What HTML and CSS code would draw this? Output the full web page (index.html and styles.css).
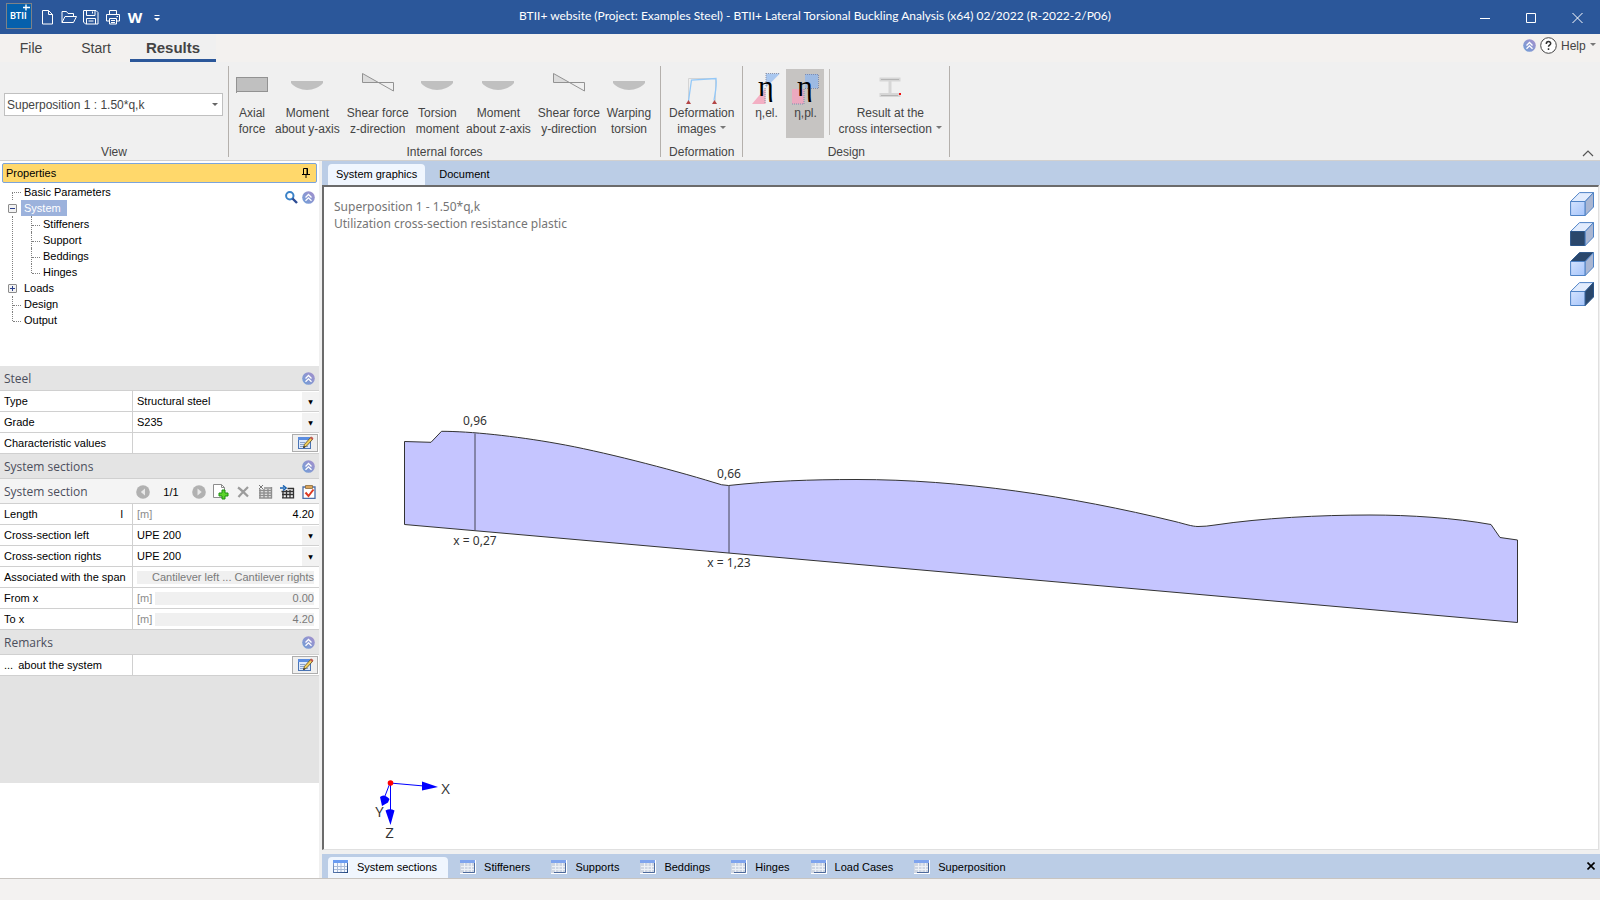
FILE: index.html
```html
<!DOCTYPE html>
<html lang="en">
<head>
    <meta charset="UTF-8">
    <meta name="viewport" content="width=device-width, initial-scale=1.0">
    <title>BTII+ website (Project: Examples Steel)</title>
    <link rel="stylesheet" href="styles.css">
</head>
<body>

<svg class="symbols" aria-hidden="true">
    <defs>
        <linearGradient id="gradFront" x1="0" y1="0" x2="1" y2="1">
            <stop offset="0" stop-color="#d4e3fd"/><stop offset="1" stop-color="#a5c4fb"/>
        </linearGradient>
        <linearGradient id="gradTable" x1="0" y1="0" x2="1" y2="1">
            <stop offset="0" stop-color="#8aa6d8"/><stop offset="1" stop-color="#23477f"/>
        </linearGradient>
        <linearGradient id="gradRound" x1="1" y1="0" x2="0" y2="1">
            <stop offset="0" stop-color="#a58fcb"/><stop offset="1" stop-color="#6f9fd8"/>
        </linearGradient>
    </defs>
    <symbol id="collapse" viewBox="0 0 13 13">
        <circle cx="6.5" cy="6.5" r="6.3" fill="url(#gradRound)"/>
        <path d="M3.5 6.5l3-3 3 3M3.5 9.8l3-3 3 3" fill="none" stroke="#fff" stroke-width="1.3"/>
    </symbol>
    <symbol id="arc" viewBox="0 0 32 36">
        <path d="M0 12h32v2c-3 4-10 7-16 7s-13-3-16-7z" fill="#c0c0c0"/>
    </symbol>
    <symbol id="shear" viewBox="0 0 32 36">
        <path d="M0.500 4.500v9h16z" fill="#dcdcdc"/>
        <path d="M0.500 4.500v9h31v8.500z" fill="none" stroke="#929292"/>
    </symbol>
    <symbol id="table" viewBox="0 0 16 14">
        <rect x="0" y="0" width="15.500" height="13.500" fill="#fff"/>
        <rect x="0.500" y="0.500" width="14" height="12" fill="#f4f8ff" stroke="url(#gradTable)"/>
        <rect x="0" y="0" width="15" height="3" fill="#6a9cf2"/>
        <path d="M1 6.500h13M1 9.500h13M4.500 3v9M8 3v9M11.500 3v9" stroke="#a9bbd8" fill="none"/>
    </symbol>
    <symbol id="tableDim" viewBox="0 0 16 14">
        <rect x="0" y="0" width="16" height="14" fill="#fff"/>
        <rect x="0" y="0" width="15" height="13" fill="#cfd6e2"/>
        <rect x="0" y="0" width="15" height="3" fill="#7fa4ee"/>
        <path d="M1 6.500h13M1 9.500h13M4.500 3v9M8 3v9M11.500 3v9" stroke="#eef1f6" fill="none"/>
        <path d="M14.500 3v9.500H3" stroke="#4d6a9c" fill="none"/>
    </symbol>
    <symbol id="edit" viewBox="0 0 17 14">
        <rect x="1.500" y="1.500" width="12" height="11" fill="#dce9fc" stroke="#4a74b4"/>
        <rect x="1" y="1" width="13" height="3" fill="#5b8de0"/>
        <path d="M3 6.500h5M3 8.500h4M3 10.500h8" stroke="#8aa4cc"/>
        <path d="M6.500 11.500l1-3.200 6.300-7 2 1.800-6.300 7z" fill="#f2cf5b" stroke="#5a4a20" stroke-width="0.800"/>
        <path d="M13 2l1.500-1.500 2 1.800-1.500 1.600z" fill="#c4574e"/>
        <path d="M6.300 12l.6-2 1.400 1.300z" fill="#111"/>
    </symbol>
    <symbol id="cubeTop" viewBox="0 0 24 24">
        <path d="M0.600 9.500L9.500 0.600h14l-8.300 8.900z"/>
    </symbol>
    <symbol id="cubeFront" viewBox="0 0 24 24">
        <path d="M0.600 9.500h14.600v14H0.600z"/>
    </symbol>
    <symbol id="cubeSide" viewBox="0 0 24 24">
        <path d="M15.200 9.500l8.300-8.900v14.400l-8.300 8.500z"/>
    </symbol>
</svg>

<div class="app">
    <header class="titlebar">
        <div class="quick">
            <svg class="logo" width="27" height="27" viewBox="0 0 27 27">
                <rect x="0.500" y="0.500" width="25" height="25" fill="#0560ac" stroke="#7d8288"/>
                <text x="4" y="16" class="logo-text">BTII</text>
                <path d="M20 1.500v6M17 4.500h7" stroke="#fff" stroke-width="1.400"/>
            </svg>
            <button type="button" aria-label="New">
                <svg width="16" height="16" viewBox="0 0 16 16"><path d="M3.500 1.500h6l4 4v9.500h-10zM9.500 1.500v4h4"/></svg>
            </button>
            <button type="button" aria-label="Open">
                <svg width="16" height="16" viewBox="0 0 16 16"><path d="M1 13.500v-11h4.500l1.500 2h5.500v3M1 13.500l3-6h11.500l-3 6z"/></svg>
            </button>
            <button type="button" aria-label="Save">
                <svg width="16" height="16" viewBox="0 0 16 16"><path d="M0.500 1.500h12.500l2 2v11.500h-12.500l-2-2zM3.500 1.500v5h8.500v-5M9.500 2.500v2M3.500 15v-5.500h9v5.500M5.500 12h5"/></svg>
            </button>
            <button type="button" aria-label="Print">
                <svg width="16" height="16" viewBox="0 0 16 16"><path d="M4.500 5.500v-4h7v4M4.500 12h-3v-6.500h13v6.500h-3M4.500 9.500h7v5.500h-7zM6 11.500h4M6 13.500h4M11.500 7.500h1.500"/></svg>
            </button>
            <button type="button" class="word" aria-label="Export to Word">W</button>
            <button type="button" aria-label="Customize toolbar">
                <svg width="16" height="16" viewBox="0 0 16 16"><path d="M5.500 6.500h5"/><path class="solid" d="M5 9h6l-3 3z"/></svg>
            </button>
        </div>
        <div class="title">BTII+ website (Project: Examples Steel) - BTII+ Lateral Torsional Buckling Analysis (x64) 02/2022 (R-2022-2/P06)</div>
        <div class="window-buttons">
            <button type="button" aria-label="Minimize"><svg width="11" height="11"><path d="M0 6.500h10"/></svg></button>
            <button type="button" aria-label="Maximize"><svg width="11" height="11"><path d="M0.500 1.500h9v9h-9z"/></svg></button>
            <button type="button" aria-label="Close"><svg width="11" height="11"><path d="M0.500 1l10 10M10.500 1l-10 10"/></svg></button>
        </div>
    </header>

    <nav class="menu">
        <button type="button">File</button>
        <button type="button">Start</button>
        <button type="button" class="active">Results</button>
        <div class="help">
            <svg width="13" height="13"><use href="#collapse"/></svg>
            <svg width="17" height="17" viewBox="0 0 17 17"><circle cx="8.500" cy="8.500" r="7.800" fill="#fff" stroke="#444"/><path d="M6.300 7c0-3.300 4.600-3 4.400-.4-.2 1.600-2.200 1.500-2.200 3.200M8.500 11.200v1.700" fill="none" stroke="#333" stroke-width="1.500"/></svg>
            <button type="button">Help <i class="caret"></i></button>
        </div>
    </nav>

    <section class="ribbon">
        <div class="group view">
            <div class="body">
                <label class="combo">
                    <select aria-label="Superposition">
                        <option>Superposition 1 : 1.50*q,k</option>
                    </select>
                </label>
            </div>
            <div class="caption">View</div>
        </div>
        <div class="group forces">
            <div class="body">
                <button type="button"><svg width="32" height="36"><rect x="0.500" y="8.500" width="31" height="14" fill="#c0c0c0" stroke="#929292"/><path d="M0.500 22v2" stroke="#929292"/></svg>Axial<br>force</button>
                <button type="button"><svg width="32" height="36"><use href="#arc"/></svg>Moment<br>about y-axis</button>
                <button type="button"><svg width="32" height="36"><use href="#shear"/></svg>Shear force<br>z-direction</button>
                <button type="button"><svg width="32" height="36"><use href="#arc"/></svg>Torsion<br>moment</button>
                <button type="button"><svg width="32" height="36"><use href="#arc"/></svg>Moment<br>about z-axis</button>
                <button type="button"><svg width="32" height="36"><use href="#shear"/></svg>Shear force<br>y-direction</button>
                <button type="button"><svg width="32" height="36"><use href="#arc"/></svg>Warping<br>torsion</button>
            </div>
            <div class="caption">Internal forces</div>
        </div>
        <div class="group deformation">
            <div class="body">
                <button type="button">
                    <svg width="32" height="36"><path d="M2.500 32v-22.500h27v22.500" fill="none" stroke="#d4d4d4"/><path d="M2.500 32L5.500 11 30 9.500c1 8-1 15-2 22" fill="none" stroke="#93c8f8" stroke-width="1.300"/><path d="M0 35l2.500-4 2.500 4zM26 35l2.500-4 2.500 4z" fill="#b34545"/></svg>
                    Deformation<br>images <i class="caret"></i>
                </button>
            </div>
            <div class="caption">Deformation</div>
        </div>
        <div class="group design">
            <div class="body">
                <button type="button" class="eta-button">
                    <svg width="28" height="36" viewBox="0 0 28 36"><path d="M14 4.500h14l-14 14z" fill="#a9c7ef"/><path d="M13.500 19v16H0z" fill="#f3afc3"/><path d="M14 4.500h14M14 4v14M13 19v16" stroke="#8e94a8" stroke-dasharray="1 1"/><text x="6" y="27" class="eta">η</text></svg>
                    η,el.
                </button>
                <button type="button" class="eta-button pressed">
                    <svg width="28" height="36" viewBox="0 0 28 36"><path d="M14 5h13v14H14z" fill="#9dbae3"/><path d="M1 20h12v15H1z" fill="#eba9bf"/><path d="M14 5.500h13.500v14H14M13 20v15H1" fill="none" stroke="#7f8cae" stroke-dasharray="1 1"/><text x="6" y="27" class="eta">η</text></svg>
                    η,pl.
                </button>
                <span class="divider"></span>
                <button type="button">
                    <svg width="32" height="36"><path d="M5.500 10.500h21M5.500 26h21" stroke="#d6d6d6" stroke-width="4"/><path d="M16 11v15" stroke="#d6d6d6" stroke-width="3"/><path d="M7 10.500h18M7 26.500h17" stroke="#b4b4b4"/><path d="M25 24h2v2h-2z" fill="#f01010"/></svg>
                    Result at the<br>cross intersection <i class="caret"></i>
                </button>
            </div>
            <div class="caption">Design</div>
        </div>
        <button type="button" class="fold" aria-label="Collapse ribbon"><svg width="12" height="7"><path d="M1 6l5-5 5 5" fill="none" stroke="#555" stroke-width="1.200"/></svg></button>
    </section>

    <div class="workspace">
        <aside class="sidebar">
            <h2 class="panel-title">Properties
                <button type="button" aria-label="Pin"><svg width="8" height="10"><path d="M1.500 6V0.500h4V6M5 0v6M0 6.500h8M4 7v3" fill="none" stroke="#000"/></svg></button>
            </h2>

            <div class="tree-panel">
                <ul class="tree">
                    <li><span class="branch first"></span><a href="#">Basic Parameters</a></li>
                    <li><button type="button" class="expander" aria-label="Collapse System"><svg width="5" height="5"><path d="M0 2.500h5"/></svg></button><a href="#" class="selected">System</a></li>
                    <li class="nested">
                        <ul>
                            <li><span class="branch"></span><a href="#">Stiffeners</a></li>
                            <li><span class="branch"></span><a href="#">Support</a></li>
                            <li><span class="branch"></span><a href="#">Beddings</a></li>
                            <li><span class="branch last"></span><a href="#">Hinges</a></li>
                        </ul>
                    </li>
                    <li><button type="button" class="expander" aria-label="Expand Loads"><svg width="5" height="5"><path d="M0 2.500h5M2.500 0v5"/></svg></button><a href="#">Loads</a></li>
                    <li><span class="branch"></span><a href="#">Design</a></li>
                    <li><span class="branch last"></span><a href="#">Output</a></li>
                </ul>
                <div class="tree-tools">
                    <button type="button" aria-label="Search"><svg width="13" height="13"><circle cx="4.800" cy="4.800" r="3.700" fill="#fff" stroke="#3a82c8" stroke-width="2"/><path d="M7.500 7.500l4.500 4.500" stroke="#2c4c94" stroke-width="2.400"/></svg></button>
                    <button type="button" aria-label="Collapse"><svg width="13" height="13"><use href="#collapse"/></svg></button>
                </div>
            </div>

            <form class="properties">
                <h3>Steel <button type="button" aria-label="Collapse Steel"><svg width="13" height="13"><use href="#collapse"/></svg></button></h3>
                <div class="row">
                    <label for="type">Type</label>
                    <div class="value drop"><select id="type"><option>Structural steel</option></select></div>
                </div>
                <div class="row">
                    <label for="grade">Grade</label>
                    <div class="value drop"><select id="grade"><option>S235</option></select></div>
                </div>
                <div class="row">
                    <label for="characteristic">Characteristic values</label>
                    <div class="value"><button type="button" id="characteristic" class="edit"><svg width="17" height="14"><use href="#edit"/></svg></button></div>
                </div>

                <h3>System sections <button type="button" aria-label="Collapse System sections"><svg width="13" height="13"><use href="#collapse"/></svg></button></h3>
                <div class="record">
                    <h4>System section</h4>
                    <button type="button" aria-label="Previous"><svg width="14" height="14"><circle cx="7" cy="7" r="6.800" fill="#b1b1b1"/><path d="M9 3.500v7L4.800 7z" fill="#e8e8e8"/></svg></button>
                    <span class="count">1/1</span>
                    <button type="button" aria-label="Next"><svg width="14" height="14"><circle cx="7" cy="7" r="6.800" fill="#b1b1b1"/><path d="M5.500 3.500v7L9.700 7z" fill="#e8e8e8"/></svg></button>
                    <button type="button" aria-label="Add"><svg width="16" height="16"><path d="M0.500 0.500h8l3 3v10h-11z" fill="#fff" stroke="#8c8c8c"/><path d="M8.500 0.500v3h3" fill="none" stroke="#8c8c8c"/><path d="M9 6h3v3h3v3h-3v3H9v-3H6V9h3z" fill="#5bd42c" stroke="#1d8f10"/></svg></button>
                    <button type="button" aria-label="Delete"><svg width="12" height="12"><path d="M1 1.500c3 2 7 6 10 9M11 1C8 4 4 8 1.500 11" fill="none" stroke="#9c9c9c" stroke-width="2.200"/></svg></button>
                    <button type="button" aria-label="Clear table"><svg width="15" height="14"><path d="M1 5.500h13M1 8h13M1 10.500h13M1 13h13M2 4v9.500M6 4v9.500M10 4v9.500M13.500 2v11.500M6 3h8" fill="none" stroke="#8e8e8e" stroke-width="1.400"/><path d="M1 0l4 4M5 0L1 4" stroke="#777"/></svg></button>
                    <button type="button" aria-label="Insert table"><svg width="15" height="14"><path d="M3 6v7.500M1.500 6.500H14M2 9.500h12M2 12.800h12M6.500 5v8M10 5v8M13.500 3v10.500M7.500 3.500H14" fill="none" stroke="#333" stroke-width="1.300"/><path d="M0 3h4M3 0.500L6 3 3 5.500" fill="none" stroke="#1660b0" stroke-width="1.600"/></svg></button>
                    <button type="button" aria-label="Check"><svg width="14" height="14"><path d="M1 2h12v11.500H1z" fill="#fff" stroke="#4d6fa8" stroke-width="1.300"/><path d="M3.500 0.500h7v3h-7z" fill="#dba55c" stroke="#8a6a3c" stroke-width="0.800"/><path d="M3.500 7.500l3 3.500L11.500 4.500" fill="none" stroke="#dd3a22" stroke-width="2"/></svg></button>
                </div>
                <div class="row">
                    <label for="length">Length <span>l</span></label>
                    <div class="value"><span class="unit">[m]</span><input id="length" type="text" value="4.20"></div>
                </div>
                <div class="row">
                    <label for="csLeft">Cross-section left</label>
                    <div class="value drop"><select id="csLeft"><option>UPE 200</option></select></div>
                </div>
                <div class="row">
                    <label for="csRight">Cross-section rights</label>
                    <div class="value drop"><select id="csRight"><option>UPE 200</option></select></div>
                </div>
                <div class="row">
                    <label for="span">Associated with the span</label>
                    <div class="value"><input id="span" type="text" value="Cantilever left ... Cantilever rights" readonly></div>
                </div>
                <div class="row">
                    <label for="fromX">From x</label>
                    <div class="value"><span class="unit">[m]</span><input id="fromX" type="text" value="0.00" readonly></div>
                </div>
                <div class="row">
                    <label for="toX">To x</label>
                    <div class="value"><span class="unit">[m]</span><input id="toX" type="text" value="4.20" readonly></div>
                </div>

                <h3>Remarks <button type="button" aria-label="Collapse Remarks"><svg width="13" height="13"><use href="#collapse"/></svg></button></h3>
                <div class="row">
                    <label for="about" class="about">... <span>about the system</span></label>
                    <div class="value"><button type="button" id="about" class="edit"><svg width="17" height="14"><use href="#edit"/></svg></button></div>
                </div>
            </form>
        </aside>

        <main class="main">
            <div class="tabs top">
                <button type="button" class="active">System graphics</button>
                <button type="button">Document</button>
            </div>

            <div class="canvas">
                <svg class="plot" viewBox="324 187 1274 662">
                    <path class="area" d="M404.500 524.500V441.500L431 442.300L441.500 431.300C470 431.300 515 436 557 443.500C600 451 670 469 714 482.500Q722 485.500 728.500 485.500C770 481 810 479.500 857 479.500C960 479.500 1070 496 1175 521.500C1185 524 1192 526.500 1198 526.500Q1206 526.500 1215 525C1262 518 1320 515 1370 515C1410 515 1455 518 1491 524.500L1500 537.500L1517.500 540V622.500Z"/>
                    <path class="cut" d="M475 433.500V530.500M729 485.500V553"/>
                    <g class="labels">
                        <text x="475" y="425">0,96</text>
                        <text x="729" y="478">0,66</text>
                        <text x="475" y="545">x = 0,27</text>
                        <text x="729" y="567">x = 1,23</text>
                    </g>
                    <g class="axes">
                        <path d="M390 783L424 786M390 783L385 796M390.500 783V811"/>
                        <path class="head" d="M422 781.500L438 787L422 790.500zM385.500 810.500Q390 808 394.500 810.500L390.500 825zM380 797Q384 793 389.500 799L388 802.500L382 806Z"/>
                        <circle cx="390.500" cy="783" r="2.800"/>
                        <text x="445.500" y="794">X</text>
                        <text x="379.500" y="817">Y</text>
                        <text x="389.500" y="838">Z</text>
                    </g>
                </svg>
                <p class="result">Superposition 1 - 1.50*q,k<br>Utilization cross-section resistance plastic</p>
                <div class="cubes">
                    <button type="button" aria-label="3D view"><svg width="24" height="24"><use href="#cubeTop" class="top"/><use href="#cubeFront" class="front"/><use href="#cubeSide" class="side"/></svg></button>
                    <button type="button" aria-label="Front view"><svg width="24" height="24"><use href="#cubeTop" class="top"/><use href="#cubeFront" class="dark"/><use href="#cubeSide" class="side"/></svg></button>
                    <button type="button" aria-label="Top view"><svg width="24" height="24"><use href="#cubeTop" class="dark"/><use href="#cubeFront" class="front"/><use href="#cubeSide" class="side"/></svg></button>
                    <button type="button" aria-label="Side view"><svg width="24" height="24"><use href="#cubeTop" class="top"/><use href="#cubeFront" class="front"/><use href="#cubeSide" class="dark"/></svg></button>
                </div>
            </div>

            <div class="tabs bottom">
                <button type="button" class="active"><svg width="16" height="14"><use href="#table"/></svg>System sections</button>
                <button type="button"><svg width="16" height="14"><use href="#tableDim"/></svg>Stiffeners</button>
                <button type="button"><svg width="16" height="14"><use href="#tableDim"/></svg>Supports</button>
                <button type="button"><svg width="16" height="14"><use href="#tableDim"/></svg>Beddings</button>
                <button type="button"><svg width="16" height="14"><use href="#tableDim"/></svg>Hinges</button>
                <button type="button"><svg width="16" height="14"><use href="#tableDim"/></svg>Load Cases</button>
                <button type="button"><svg width="16" height="14"><use href="#tableDim"/></svg>Superposition</button>
                <button type="button" class="close" aria-label="Close"><svg width="8" height="8"><path d="M0.500 0.500l7 7M7.500 0.500l-7 7" stroke="#000" stroke-width="1.600"/></svg></button>
            </div>
        </main>
    </div>

    <footer class="statusbar"></footer>
</div>

</body>
</html>
```
FILE: styles.css
```css
* {
    box-sizing: border-box;
}
body {
    margin: 0;
    font-family: "Liberation Sans", Arial, sans-serif;
    font-size: 12px;
    color: #444;
    background: #f0f0f0;
}
button {
    margin: 0;
    padding: 0;
    border: none;
    background: none;
    font: inherit;
    color: inherit;
}
svg {
    display: block;
    flex: none;
}
.symbols {
    position: absolute;
    width: 0;
    height: 0;
}
.app {
    display: flex;
    flex-direction: column;
    height: 100vh;
}

/* title bar */
.titlebar {
    display: flex;
    align-items: center;
    height: 34px;
    flex: none;
    background: #2b579a;
    color: #fff;
}
.quick {
    display: flex;
    align-items: center;
    padding: 0 0 1px 6px;
}
.logo {
    margin-right: 3px;
}
.logo-text {
    font: bold 9px Lato, sans-serif;
    fill: #fff;
}
.quick button {
    width: 22px;
    height: 22px;
    display: flex;
    align-items: center;
    justify-content: center;
}
.titlebar button path {
    fill: none;
    stroke: #fff;
}
.titlebar button .solid {
    fill: #fff;
    stroke: none;
}
.quick .word {
    font: bold 15px "Open Sans", sans-serif;
}
.title {
    flex: 1;
    padding-bottom: 3px;
    text-align: center;
    font: 12px Lato, sans-serif;
    white-space: nowrap;
}
.window-buttons {
    display: flex;
}
.window-buttons button {
    width: 46px;
    height: 34px;
    display: flex;
    align-items: center;
    justify-content: center;
}

/* menu */
.menu {
    display: flex;
    height: 28px;
    flex: none;
    background: #f3f1ef;
    font-size: 14px;
}
.menu > button {
    width: 62px;
    padding-top: 2px;
    border-bottom: 3px solid transparent;
}
.menu > button + button {
    width: 68px;
}
.menu > button.active {
    width: 86px;
    font-size: 15px;
    font-weight: bold;
    border-color: #2b579a;
    background: #f0f0f0;
}
.help {
    display: flex;
    align-items: center;
    gap: 4px;
    height: 23px;
    margin-left: auto;
    padding-right: 4px;
    font-size: 12px;
}
.caret {
    display: inline-block;
    margin-left: 1px;
    border: 3px solid transparent;
    border-top-color: #777;
    border-bottom: none;
    vertical-align: 4px;
}

/* ribbon */
.ribbon {
    display: flex;
    height: 99px;
    flex: none;
    padding: 4px 0 3px;
    border-bottom: 1px solid #d2d0ce;
    background: #f0f0f0;
}
.group {
    display: flex;
    flex-direction: column;
    border-right: 1px solid #b4b0ac;
}
.group .body {
    display: flex;
    flex: 1;
    gap: 1px;
    padding: 3px 4px 0;
}
.group.forces .body {
    padding-right: 6px;
}
.group .caption {
    line-height: 10px;
    text-align: center;
}
.group .body > button {
    display: block;
    height: 69px;
    padding: 0 3px 1px;
    line-height: 16px;
    white-space: nowrap;
}
.group .body > button svg {
    margin: 0 auto;
}
.group.deformation .body > button {
    padding: 0 4px 1px;
}
.view {
    width: 229px;
}
.group.view .body {
    align-items: flex-start;
    padding: 27px 5px 0 4px;
}
.combo {
    display: flex;
    align-items: center;
    width: 100%;
    height: 23px;
    padding-right: 4px;
    background: #fff;
    border: 1px solid #c0c0c0;
}
.combo::after {
    content: "";
    border: 3px solid transparent;
    border-top-color: #666;
    border-bottom: none;
}
select {
    appearance: none;
    flex: 1;
    min-width: 0;
    margin: 0;
    padding: 0;
    border: none;
    background: none;
    font: inherit;
    color: inherit;
}
.combo select {
    padding-left: 2px;
}
.group .body > .eta-button {
    width: 38px;
    padding-bottom: 17px;
}
.group .body > .pressed {
    background: #c6c4c2;
}
.eta {
    font: 30px "Liberation Serif", serif;
    fill: #000;
}
.divider {
    width: 1px;
    height: 66px;
    margin: 0 4px;
    background: #c0bdba;
}
.fold {
    margin: auto 6px 0 auto;
}

/* sidebar */
.workspace {
    display: flex;
    flex: 1;
    min-height: 0;
}
.sidebar {
    width: 319px;
    flex: none;
    background: #fff;
    color: #000;
    font-size: 11px;
}
.panel-title {
    display: flex;
    justify-content: space-between;
    align-items: center;
    height: 20px;
    margin: 2px 2px 1px;
    padding: 0 6px 0 3px;
    border: 1px solid #7ba4dc;
    border-radius: 2px;
    background: #ffd86b;
    font-size: 11px;
    font-weight: normal;
}
.tree-panel {
    display: flex;
    justify-content: space-between;
    height: 182px;
}
.tree, .tree ul {
    margin: 0;
    padding: 0;
    list-style: none;
}
.tree {
    padding-left: 12px;
}
.tree li {
    display: flex;
    height: 16px;
    line-height: 16px;
}
.tree .nested {
    height: auto;
    border-left: 1px dotted #808080;
}
.nested ul {
    padding-left: 18px;
}
.tree a {
    padding: 0 3px;
    color: inherit;
    text-decoration: none;
}
.tree .selected {
    padding-right: 6px;
    background: #9cb2dc;
    color: #fff;
}
.branch {
    width: 9px;
    border-left: 1px dotted #808080;
}
.branch::before {
    content: "";
    display: block;
    height: 9px;
    border-bottom: 1px dotted #808080;
}
.branch.first {
    height: 8px;
    margin-top: 8px;
    border-top: 1px dotted #808080;
}
.branch.first::before {
    display: none;
}
.branch.last {
    height: 9px;
}
.expander {
    display: flex;
    align-items: center;
    justify-content: center;
    width: 9px;
    height: 9px;
    margin: 4px 4px 0 -4px;
    border: 1px solid #8c8c8c;
    border-radius: 1px;
    background: #f2f2f2;
}
.expander path {
    stroke: #2a3f8c;
}
.tree-tools {
    display: flex;
    gap: 4px;
    align-items: flex-start;
    padding: 7px 4px 0 0;
}
.properties {
    height: 417px;
    background: #e3e3e3;
}
.properties h3, .properties h4 {
    margin: 0;
    font: 12px "Open Sans", sans-serif;
    color: #4b4e5c;
}
.properties h3 {
    display: flex;
    align-items: center;
    justify-content: space-between;
    height: 25px;
    padding: 0 4px;
    background: #e4e4e4;
    border-bottom: 1px solid #d0d0d0;
}
.record {
    display: flex;
    align-items: center;
    gap: 2px;
    height: 25px;
    padding: 1px 0 0 4px;
    background: #f4f4f4;
    border-bottom: 1px solid #d0d0d0;
}
.record h4 {
    flex: 1;
}
.record button {
    display: flex;
    justify-content: center;
    width: 20px;
}
.record .count {
    width: 32px;
    text-align: center;
}
.row {
    display: flex;
    height: 21px;
    background: #fff;
    border-bottom: 1px solid #d0d0d0;
}
.row label {
    display: flex;
    align-items: center;
    justify-content: space-between;
    width: 133px;
    padding: 0 9px 0 4px;
    border-right: 1px solid #d0d0d0;
    white-space: nowrap;
}
.row .about {
    justify-content: flex-start;
    gap: 5px;
}
.value {
    display: flex;
    align-items: center;
    flex: 1;
    min-width: 0;
    padding: 0 5px 0 4px;
}
.value input {
    flex: 1;
    min-width: 0;
    height: 13px;
    padding: 0;
    border: none;
    background: none;
    font: inherit;
    color: inherit;
    text-align: right;
}
.value input:read-only {
    background: #f0f0f0;
    color: #7a7a7a;
}
.unit {
    width: 18px;
    color: #8c8c8c;
}
.value .edit {
    display: flex;
    align-items: center;
    justify-content: center;
    width: 26px;
    height: 18px;
    margin-left: auto;
    margin-right: -4px;
    border: 1px solid #adadad;
    background: #f0f0f0;
}
.drop {
    padding-right: 0;
}
.drop::after {
    content: "▼";
    width: 17px;
    height: 19px;
    background: #f2f2f2;
    font: 6px/19px "DejaVu Sans", sans-serif;
    text-align: center;
}

/* main area */
.main {
    display: flex;
    flex-direction: column;
    flex: 1;
    min-width: 0;
    margin-left: 3px;
    color: #000;
}
.tabs {
    display: flex;
    height: 24px;
    flex: none;
    padding: 3px 5px 0 6px;
    background: #bbcde6;
    font-size: 11px;
}
.tabs button {
    display: flex;
    align-items: center;
    gap: 8px;
    padding: 0 8px 1px;
    margin-right: 6px;
    border-radius: 4px 4px 0 0;
}
.tabs .active {
    background: #f0f6fe;
}
.bottom button {
    padding: 0 9px 2px 5px;
    margin-right: 7px;
}
.bottom .active {
    padding-right: 11px;
}
.tabs .close {
    margin: 0 0 0 auto;
    padding: 0 0 4px;
}
.canvas {
    display: grid;
    grid-template-columns: 1fr auto;
    grid-template-rows: minmax(0, 1fr);
    flex: 1;
    min-height: 0;
    margin: 0 1px 4px 0;
    border: 2px solid #6b6b6b;
    border-right: 1px solid #e0e0e0;
    border-bottom: 1px solid #e0e0e0;
    background: #fff;
}
.plot {
    grid-area: 1 / 1 / 2 / 3;
    width: 100%;
    height: 100%;
}
.area {
    fill: #c5c5ff;
    stroke: #333;
}
.cut {
    stroke: #445;
}
.labels {
    font: 12px "Noto Sans", sans-serif;
    fill: #333;
    text-anchor: middle;
}
.axes {
    font: 15px "Open Sans", sans-serif;
    fill: #333;
    text-anchor: middle;
}
.axes path {
    fill: none;
    stroke: #00f;
}
.axes .head {
    fill: #00f;
    stroke: none;
}
.axes circle {
    fill: #f00;
}
.result {
    grid-area: 1 / 1;
    margin: 11px 10px;
    font: 12px/17px "Noto Sans", sans-serif;
    color: #757575;
}
.cubes {
    grid-area: 1 / 2;
    display: flex;
    flex-direction: column;
    gap: 6px;
    padding: 5px 4px;
}
.cubes use {
    stroke: #4f83c6;
    stroke-linejoin: round;
}
.cubes .top {
    fill: #e2ecfd;
}
.cubes .front {
    fill: url(#gradFront);
}
.cubes .side {
    fill: #a9b6d2;
}
.cubes .dark {
    fill: #2a476b;
    stroke: #2a5488;
}

.statusbar {
    height: 22px;
    flex: none;
    border-top: 1px solid #c8c4c0;
    background: #f3f2f1;
}
```
